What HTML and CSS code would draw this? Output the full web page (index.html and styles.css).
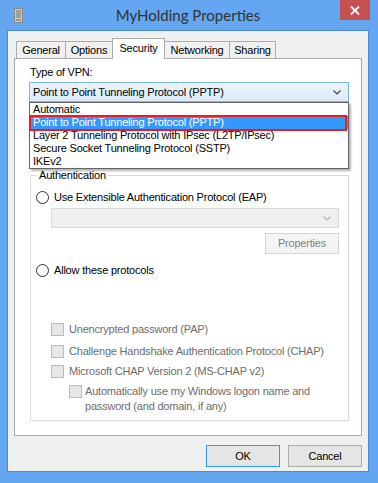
FILE: index.html
```html
<!DOCTYPE html>
<html lang="en">
<head>
    <meta charset="UTF-8">
    <title>MyHolding Properties</title>
    <link rel="stylesheet" href="styles.css">
</head>
<body>
    <div class="window">
        <div class="titlebar">
            <svg class="app-icon" width="9" height="15" viewBox="0 0 9 15">
                <rect x="0.5" y="0.5" width="8" height="14" fill="#c9c9c9" stroke="#8a8a8a"/>
                <path d="M2 3h5M2 5h5M2 7h5M2 9h5" stroke="#777" stroke-width="1"/>
                <rect x="2" y="11" width="5" height="2" fill="#999"/>
            </svg>
            <div class="title">MyHolding Properties</div>
            <div class="close-btn">
                <svg width="10" height="9" viewBox="0 0 10 9">
                    <path d="M1 0.5l8 8M9 0.5l-8 8" stroke="#fff" stroke-width="1.8"/>
                </svg>
            </div>
        </div>

        <div class="client">
            <div class="tabs">
                <div class="tab tab-general">General</div>
                <div class="tab tab-options">Options</div>
                <div class="tab tab-security active">Security</div>
                <div class="tab tab-networking">Networking</div>
                <div class="tab tab-sharing">Sharing</div>
            </div>

            <div class="panel">
                <div class="field-label">Type of VPN:</div>
                <div class="combo-wrap">
                    <div class="combo open">
                        <span>Point to Point Tunneling Protocol (PPTP)</span>
                        <svg class="chevron" width="8" height="5" viewBox="0 0 8 5">
                            <path d="M0.5 0.5l3.5 3.5 3.5-3.5" fill="none" stroke="#444" stroke-width="1.2"/>
                        </svg>
                    </div>
                    <ul class="dropdown">
                        <li>Automatic</li>
                        <li class="selected">Point to Point Tunneling Protocol (PPTP)</li>
                        <li>Layer 2 Tunneling Protocol with IPsec (L2TP/IPsec)</li>
                        <li>Secure Socket Tunneling Protocol (SSTP)</li>
                        <li>IKEv2</li>
                    </ul>
                </div>

                <div class="group">
                    <div class="group-title">Authentication</div>

                    <div class="option radio-row first">
                        <span class="radio"></span>
                        <span>Use Extensible Authentication Protocol (EAP)</span>
                    </div>
                    <div class="eap-settings">
                        <div class="combo disabled">
                            <span></span>
                            <svg class="chevron" width="8" height="5" viewBox="0 0 8 5">
                                <path d="M0.5 0.5l3.5 3.5 3.5-3.5" fill="none" stroke="#b5b5b5" stroke-width="1.2"/>
                            </svg>
                        </div>
                        <div class="btn btn-disabled">Properties</div>
                    </div>

                    <div class="option radio-row second">
                        <span class="radio"></span>
                        <span>Allow these protocols</span>
                    </div>

                    <div class="option check-row pap">
                        <span class="check"></span>
                        <span>Unencrypted password (PAP)</span>
                    </div>
                    <div class="option check-row chap">
                        <span class="check"></span>
                        <span>Challenge Handshake Authentication Protocol (CHAP)</span>
                    </div>
                    <div class="option check-row mschap">
                        <span class="check"></span>
                        <span>Microsoft CHAP Version 2 (MS-CHAP v2)</span>
                    </div>
                    <div class="option check-row auto-logon">
                        <span class="check"></span>
                        <span>Automatically use my Windows logon name and<br>password (and domain, if any)</span>
                    </div>
                </div>
            </div>

            <div class="dialog-buttons">
                <div class="btn btn-default">OK</div>
                <div class="btn">Cancel</div>
            </div>
        </div>
    </div>
</body>
</html>
```

FILE: styles.css
```css
body {
    margin: 0;
    font-family: 'Liberation Sans', Arial, sans-serif;
    font-size: 11px;
    letter-spacing: -0.2px;
    color: #000;
}

.window {
    width: 378px;
    height: 483px;
    box-sizing: border-box;
    padding: 0 9px 11px 7px;
    background: #64a6ef;
    display: flex;
    flex-direction: column;
}

/* title bar */

.titlebar {
    height: 30px;
    display: grid;
    grid-template-columns: 1fr auto 1fr;
    align-items: start;
}

.app-icon {
    margin: 8px 0 0 7px;
}

.title {
    font-family: Lato, 'Liberation Sans', sans-serif;
    font-size: 15px;
    letter-spacing: 0;
    color: #333;
    line-height: 20px;
    padding-top: 5px;
}

.close-btn {
    justify-self: end;
    width: 30px;
    height: 20px;
    margin-right: -1px;
    background: #c75050;
    display: flex;
    align-items: center;
    justify-content: center;
}

/* client area */

.client {
    height: 442px;
    box-sizing: border-box;
    background: #f0f0f0;
    border: 1px solid #4b8ad4;
    display: flex;
    flex-direction: column;
}

.tabs {
    display: flex;
    align-items: flex-end;
    height: 20px;
    margin: 7px 0 0 8px;
    position: relative;
    z-index: 1;
}

.tab {
    height: 17px;
    box-sizing: border-box;
    border: 1px solid #acacac;
    border-bottom: none;
    background: #f0f0f0;
    text-align: center;
    line-height: 17px;
    margin-left: -1px;
    white-space: nowrap;
}

.tab-general { width: 50px; margin-left: 0; }
.tab-options { width: 48px; }
.tab-security { width: 53px; }
.tab-networking { width: 66px; }
.tab-sharing { width: 47px; }

.tab.active {
    height: 21px;
    margin-bottom: -1px;
    background: #fff;
    line-height: 18px;
}

.panel {
    height: 378px;
    box-sizing: border-box;
    margin: 0 6px;
    border: 1px solid #acacac;
    background: #fff;
    padding: 6px 0 0 14px;
}

.field-label {
    line-height: 15px;
    margin-left: 1px;
}

/* combo boxes */

.combo-wrap {
    position: relative;
    width: 320px;
    margin-top: 2px;
}

.combo {
    height: 20px;
    box-sizing: border-box;
    border: 1px solid #acacac;
    display: flex;
    align-items: center;
    justify-content: space-between;
    padding: 0 7px 0 3px;
}

.combo.open {
    border-color: #7eb4ea;
    background: linear-gradient(#ecf4fc, #dcecfc);
}

.combo.disabled {
    border-color: #d9d9d9;
    background: #efefef;
}

.dropdown {
    position: absolute;
    top: 100%;
    left: 0;
    width: 320px;
    box-sizing: border-box;
    margin: 0;
    padding: 0;
    list-style: none;
    background: #fff;
    border: 1px solid #646464;
    box-shadow: 2px 2px 2px rgba(0, 0, 0, 0.3);
    z-index: 2;
}

.dropdown li {
    height: 13px;
    line-height: 13px;
    padding-left: 3px;
    white-space: nowrap;
}

.dropdown li.selected {
    position: relative;
    background: #3399ff;
    color: #fff;
}

.dropdown li.selected::after {
    content: '';
    position: absolute;
    top: -1px;
    bottom: -2px;
    left: -1px;
    right: 1px;
    border: 2px solid #ed1c24;
}

/* authentication group */

.group {
    position: relative;
    width: 319px;
    height: 246px;
    box-sizing: border-box;
    margin: 73px 0 0 1px;
    border: 1px solid #dcdcdc;
    padding: 0 0 0 5px;
}

.group-title {
    position: absolute;
    top: -8px;
    left: 6px;
    padding: 0 2px;
    background: #fff;
    line-height: 15px;
}

.option {
    display: flex;
    align-items: center;
    line-height: 15px;
    color: #6d6d6d;
    white-space: nowrap;
}

.radio-row {
    color: #000;
    gap: 5px;
}

.radio-row.first { margin-top: 14px; }
.radio-row.second { margin-top: 9px; }

.radio {
    width: 13px;
    height: 13px;
    box-sizing: border-box;
    border: 1px solid #333;
    border-radius: 50%;
    background: #fff;
}

.eap-settings {
    margin: 3px 9px 0 15px;
    display: flex;
    flex-direction: column;
    align-items: flex-end;
    gap: 5px;
}

.eap-settings .combo {
    align-self: stretch;
}

.check-row {
    gap: 5px;
    margin-left: 15px;
}

.check-row.pap { margin-top: 44px; }
.check-row.chap { margin-top: 7px; }
.check-row.mschap { margin-top: 5px; }

.check-row.auto-logon {
    margin: 5px 0 0 33px;
    align-items: flex-start;
    gap: 3px;
}

.check {
    width: 13px;
    height: 13px;
    flex-shrink: 0;
    box-sizing: border-box;
    border: 1px solid #bcbcbc;
    background: #e6e6e6;
}

.auto-logon .check {
    margin-top: 1px;
}

/* buttons */

.btn {
    width: 74px;
    height: 22px;
    box-sizing: border-box;
    border: 1px solid #acacac;
    background: #e5e5e5;
    text-align: center;
    line-height: 20px;
}

.btn-default {
    border-color: #3399ff;
}

.btn-disabled {
    height: 21px;
    line-height: 19px;
    border-color: #d5d5d5;
    background: #f4f4f4;
    color: #838383;
}

.dialog-buttons {
    display: flex;
    justify-content: flex-end;
    gap: 8px;
    margin: 9px 6px 0 0;
}
```
